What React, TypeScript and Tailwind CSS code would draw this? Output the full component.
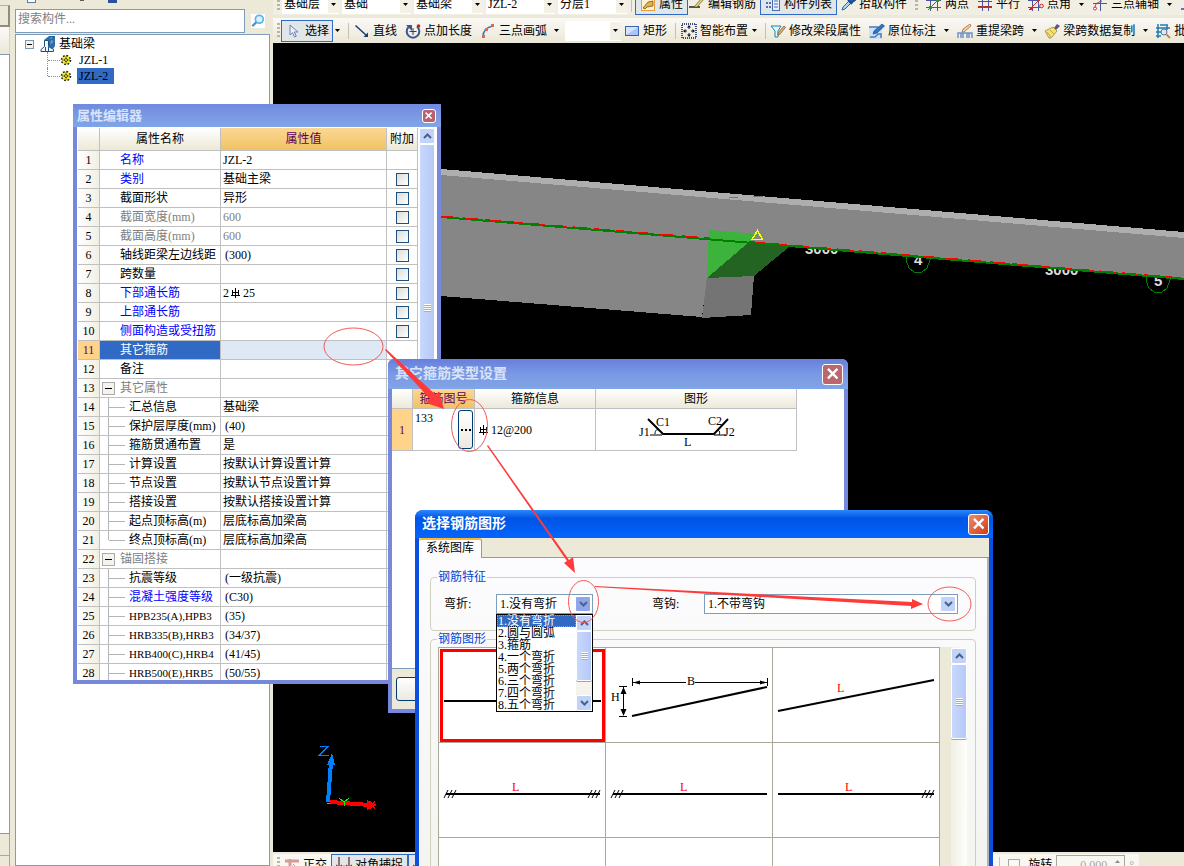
import React from 'react';

const fontStack = "font-['Liberation_Serif','Noto_Sans_CJK_SC',serif]";

type IconProps = { children: React.ReactNode; className?: string };

const Icon: React.FC<IconProps> = ({ children, className = 'h-4 w-4' }) => (
  <svg viewBox="0 0 16 16" fill="none" className={`shrink-0 ${className}`} aria-hidden="true">
    {children}
  </svg>
);

const icons = {
  pointer: (
    <Icon>
      <path d="M4 2v10l2.500-2.300L8.500 14l1.800-.8-2-4.200H12z" fill="#e8f0fb" stroke="#6b83ad" />
    </Icon>
  ),
  line: (
    <Icon>
      <path d="M1.500 2.500l11 10" stroke="#1c3a78" strokeWidth="1.500" />
      <path d="M14 14H9.500L14 9.500z" fill="#1c3a78" />
    </Icon>
  ),
  pointLength: (
    <Icon>
      <path d="M4 3.500a6.300 6.300 0 1 0 8 0" stroke="#3a5795" strokeWidth="2" />
      <path d="M1 2h6v6z" fill="#3a5795" />
      <path d="M8 5v7M4.500 8.500h7" stroke="#2a4070" />
      <circle cx="13.500" cy="3" r="1.800" fill="#b52a3c" />
    </Icon>
  ),
  arc: (
    <Icon>
      <path d="M3 14C3 7 7 4 13 3" stroke="#3d72b8" strokeWidth="1.500" />
      <path d="M2 12h3v3H2zM5 5h3v3H5zM11 1h3v3h-3z" fill="#e5674a" />
    </Icon>
  ),
  rect: (
    <Icon>
      <rect x="1.500" y="3.500" width="13" height="9" fill="#a9c6f7" stroke="#3b62b0" />
      <path d="M2 4h12L2 12z" fill="#d5e4fd" />
    </Icon>
  ),
  layout: (
    <Icon>
      <rect x="1" y="1" width="14" height="14" stroke="#3a4d78" strokeDasharray="1 1" strokeWidth="2" />
      <path d="M8 2l2 2.500H6zM8 14l2-2.500H6zM2 8l2.500-2v4zM14 8l-2.500-2v4z" fill="#10182c" />
      <path d="M8 4v2M8 10v2M4 8h2M10 8h2" stroke="#10182c" />
    </Icon>
  ),
  editSpan: (
    <Icon>
      <path d="M1 3h10l-3 5v6H5V8z" fill="#e4f5fc" stroke="#1c84ad" />
      <path d="M8 10l6-7 1.500 1.500-6 7L8 12z" fill="#f0b054" stroke="#6d4530" strokeWidth=".7" />
    </Icon>
  ),
  annotate: (
    <Icon>
      <rect x="0" y="3" width="13" height="13" fill="#cfe0f5" />
      <path d="M0 4h9M1 14h5l3-3h3v4" stroke="#4a7dbf" strokeWidth="1.500" />
      <path d="M4 11l1-3 8-7 2.500 2-7.500 7z" fill="#2f76c9" stroke="#174a8c" strokeWidth=".7" />
    </Icon>
  ),
  respan: (
    <Icon>
      <path d="M1 15V10h3v5M6 15v-5h4v5M12 15v-5h3v5M1 10h14" stroke="#6c93c9" strokeWidth="1.500" />
      <path d="M5 9l1-3 7-5 1 2-7 6z" fill="#f0cf9a" stroke="#a15e4c" strokeWidth=".7" />
    </Icon>
  ),
  brush: (
    <Icon>
      <path d="M10 5l3-4 3 2-4 4z" fill="#5a5880" />
      <path d="M1 8l8-4 4 4-6 7H5z" fill="#f5e272" stroke="#8a7a2c" strokeWidth=".7" />
      <path d="M3 9l4 5M6 7l4 4" stroke="#bda540" />
    </Icon>
  ),
  batch: (
    <Icon>
      <path d="M1 5h14M1 9h5M3 1v14M5 2h8M1 13h5M12 2v5" stroke="#1f7cb8" strokeWidth="1.500" />
      <circle cx="9" cy="9" r="3" fill="#d7ecfa" stroke="#5c7089" />
      <path d="M11.500 11.500L15 15" stroke="#d78036" strokeWidth="2" />
    </Icon>
  ),
  props: (
    <Icon>
      <rect x="1.500" y="1.500" width="13" height="13" fill="#fff3d2" stroke="#eb9d3c" />
      <path d="M3 12l5-6 5-1v5l-6 1-2 2z" fill="#e9b13f" stroke="#60471d" strokeWidth=".7" />
    </Icon>
  ),
  editBar: (
    <Icon>
      <path d="M0 11h11" stroke="#222" strokeWidth="1.500" />
      <path d="M5 11L13 2l2 1-7 8z" fill="#efd673" stroke="#5c4d20" strokeWidth=".7" />
    </Icon>
  ),
  list: (
    <Icon>
      <path d="M2 2v12M5 2v12" stroke="#5272b3" strokeDasharray="2 2" strokeWidth="2" />
      <rect x="7.500" y="1.500" width="7" height="13" fill="#e4eeff" stroke="#4a6eae" />
      <path d="M9 5h4M9 8h4M9 11h4" stroke="#4a6eae" />
    </Icon>
  ),
  dropper: (
    <Icon>
      <path d="M2 14l1-3 6-6 2 2-6 6z" fill="#a8d5f2" stroke="#2369ac" />
      <path d="M8 4l4 4M9 5l3-4 3 3-4 3z" fill="#2869bd" stroke="#1c4b91" strokeWidth="2" />
    </Icon>
  ),
  twoPoint: (
    <Icon>
      <path d="M4.500 0v15M11.500 0v15M0 4.500h15M0 11.500h15" stroke="#4a55a4" />
      <path d="M2 14L14 2" stroke="#b3302b" />
      <path d="M3 10h3v3H3zM10 3h3v3h-3z" fill="#30922d" />
    </Icon>
  ),
  parallel: (
    <Icon>
      <path d="M5.500 0v15M11.500 0v15" stroke="#4a55a4" />
      <path d="M1 5.500h14M1 10.500h14" stroke="#b3302b" />
      <path d="M1 11.500h14" stroke="#4a55a4" />
    </Icon>
  ),
  pointAngle: (
    <Icon>
      <path d="M4.500 0v15M10.500 0v15M0 4.500h12M0 11.500h12" stroke="#4a55a4" />
      <path d="M1 14L13 2" stroke="#c7282c" />
      <circle cx="13.500" cy="10" r="1.800" stroke="#d0202c" />
      <path d="M2 12h3v2H2z" fill="#d0202c" />
    </Icon>
  ),
  auxAxis: (
    <Icon>
      <path d="M8.500 0v15M1 7.500h14" stroke="#4a55a4" />
      <path d="M3 13c0-5 1-6 7-8" stroke="#d0303b" />
      <circle cx="3" cy="12.500" r="1.500" fill="#fff" stroke="#d0303b" />
    </Icon>
  ),
  more: (
    <Icon>
      <path d="M1 13h9c3 0 4-3 5-6" stroke="#5a77a8" strokeWidth="2" />
      <circle cx="12" cy="7" r="2" stroke="#d0607b" />
    </Icon>
  ),
  ortho: (
    <Icon>
      <path d="M1 4h14M6 2v12" stroke="#d99a9a" strokeWidth="3" />
      <path d="M9 7l3 3" stroke="#9aa4bb" />
    </Icon>
  ),
  snap: (
    <Icon>
      <path d="M3 0v12M13 0v12M0 8l3 3 3-3M10 8l3 3 3-3" stroke="#784848" strokeWidth="1.500" />
      <path d="M7 8h3v5H7z" fill="#dfc06b" />
    </Icon>
  ),
};

const Caret = () => (
  <svg viewBox="0 0 5 3" className="h-[3px] w-[5px] shrink-0" aria-hidden="true">
    <path d="M0 0h5L2.500 3z" fill="#000" />
  </svg>
);

const Grip: React.FC = () => (
  <span className="h-4 w-[3px] shrink-0 bg-[repeating-linear-gradient(to_bottom,#b9b5a3_0_2px,transparent_2px_4px)]" />
);

const Separator: React.FC = () => <span className="h-4 w-px shrink-0 bg-[#c5c2b4]" />;

type ToolProps = { icon: React.ReactNode; label: string; className?: string; active?: boolean };

const Tool: React.FC<ToolProps> = ({ icon, label, className = '', active = false }) => (
  <button
    type="button"
    className={`flex h-[22px] shrink-0 items-center gap-[3px] whitespace-nowrap ${
      active ? 'border border-[#316ac5] bg-[#e1e6e8] px-1' : ''
    } ${className}`}
  >
    {icon}
    {label}
  </button>
);

const MenuArrow: React.FC<{ className?: string }> = ({ className = 'ml-2' }) => (
  <button type="button" aria-label="更多" className={`flex h-[22px] shrink-0 items-center ${className}`}>
    <Caret />
  </button>
);

const ToolbarSelect: React.FC<{ value: string; label: string; className: string }> = ({ value, label, className }) => (
  <div className={`flex h-5 shrink-0 items-center bg-white ${className}`}>
    <select aria-label={label} className="min-w-0 flex-1 appearance-none pl-0.5 leading-5 outline-none">
      <option>{value}</option>
    </select>
    <span className="flex h-[18px] w-[11px] items-center justify-center bg-[#f3f1e7]">
      <Caret />
    </span>
  </div>
);

const Toolbars: React.FC = () => (
  <div className="shrink-0 bg-[#ece9d8]">
    <div className="flex h-[15px] items-end overflow-hidden bg-[#f1efe4]">
      <div className="flex h-[22px] items-center pl-1">
        <Grip />
        <ToolbarSelect label="楼层" value="基础层" className="ml-0.5 w-[57px]" />
        <ToolbarSelect label="类型" value="基础" className="ml-[3px] w-[69px]" />
        <ToolbarSelect label="构件类型" value="基础梁" className="ml-[3px] w-[69px]" />
        <ToolbarSelect label="构件" value="JZL-2" className="ml-[3px] w-[69px]" />
        <ToolbarSelect label="分层" value="分层1" className="mr-1 ml-[3px] w-[69px]" />
        <Separator />
        <Tool icon={icons.props} label="属性" active className="ml-[3px]" />
        <Tool icon={icons.editBar} label="编辑钢筋" className="ml-px" />
        <Tool icon={icons.list} label="构件列表" active className="ml-1" />
        <Tool icon={icons.dropper} label="拾取构件" className="mr-2 ml-[3px]" />
        <Grip />
        <Tool icon={icons.twoPoint} label="两点" className="ml-2" />
        <Tool icon={icons.parallel} label="平行" className="ml-2" />
        <Tool icon={icons.pointAngle} label="点角" className="ml-2" />
        <MenuArrow />
        <Tool icon={icons.auxAxis} label="三点辅轴" className="ml-2" />
        <MenuArrow />
        <Tool icon={icons.more} label="" className="ml-2" />
      </div>
    </div>
    <div className="mt-[3px] flex h-[25px] items-center overflow-hidden bg-gradient-to-b from-[#faf9f5] to-[#ebe7d7] pl-1">
      <Grip />
      <Tool icon={icons.pointer} label="选择" active className="ml-px w-[52px]" />
      <MenuArrow className="ml-[2px] mr-2" />
      <Separator />
      <Tool icon={icons.line} label="直线" className="ml-[5px]" />
      <Tool icon={icons.pointLength} label="点加长度" className="ml-2" />
      <Tool icon={icons.arc} label="三点画弧" className="ml-2" />
      <MenuArrow className="ml-[7px]" />
      <ToolbarSelect label="画法" value="" className="ml-[6px] w-14" />
      <Tool icon={icons.rect} label="矩形" className="mr-2 ml-[3px]" />
      <Separator />
      <Tool icon={icons.layout} label="智能布置" className="ml-[5px]" />
      <MenuArrow className="mr-2 ml-1" />
      <Separator />
      <Tool icon={icons.editSpan} label="修改梁段属性" className="ml-1" />
      <Tool icon={icons.annotate} label="原位标注" className="ml-2" />
      <MenuArrow />
      <Tool icon={icons.respan} label="重提梁跨" className="ml-2" />
      <MenuArrow />
      <Tool icon={icons.brush} label="梁跨数据复制" className="ml-[7px]" />
      <MenuArrow />
      <Tool icon={icons.batch} label="批" className="ml-[7px]" />
    </div>
  </div>
);

const Scene: React.FC = () => (
  <svg viewBox="273 43 911 809" shapeRendering="crispEdges" className="h-[809px] w-[911px] max-w-none" aria-label="三维视图">
    <g fill="#dcdcdc" fontFamily="Liberation Sans" fontSize="15" fontWeight="700">
      <text x="805" y="254">3000</text>
      <text x="1045" y="275">3000</text>
      <text x="914" y="265">4</text>
      <text x="1154" y="286">5</text>
    </g>
    <g fill="none" stroke="#008000">
      <path d="M906 255v5l3 8 5 4h8l5-4 3-8v-4" />
      <path d="M1146 276v5l3 7 5 4h8l5-4 3-8v-4" />
    </g>
    <path d="M441 175L1184 238V278L789 247L749 242L707 277L702 317L441 296z" fill="#868686" />
    <path d="M441 169L1184 232V238L441 175z" fill="#aeaeae" />
    <path d="M729 197.500h9M753 196.500h10" stroke="#777" />
    <path d="M707 277L754 276L751 315L702 318z" fill="#747474" />
    <path d="M709 230L757 234L749 242L707 278z" fill="#3cb43c" />
    <path d="M749 242L789 247L754 276L707 278z" fill="#236423" />
    <path d="M441 217L1184 279" stroke="#008000" strokeWidth="2" />
    <path d="M441 216L709 238M749 241.500L1184 278" stroke="#f00" strokeWidth="1" strokeDasharray="16 6" />
    <path d="M757.500 230.500l5 9h-10.500z" fill="none" stroke="#ff0" strokeWidth="1.500" />
    <path d="M319.500 746.500h8.500l-8.500 8.500h9" fill="none" stroke="#0080ff" />
    <path d="M328 802L331 762" stroke="#0080ff" strokeWidth="4" />
    <path d="M332 753l3 12h-8z" fill="#0080ff" />
    <path d="M330 802L369 805" stroke="#f00" strokeWidth="4" />
    <path d="M367 800l10 5-10 5z" fill="#f00" />
    <path d="M370 801l5 8M375 801l-5 8" stroke="#f00" />
    <path d="M339 798l5 4 5-4M344 802v4M327 803h3" fill="none" stroke="#0f0" />
  </svg>
);

const StatusBar: React.FC = () => (
  <div className="flex h-[14px] shrink-0 items-start overflow-hidden bg-[#ece9d8] pt-[2px]">
    <div className="flex h-[22px] w-[866px] shrink-0 items-center bg-[#f8f7f2] pl-1">
      <Grip />
      <Tool icon={icons.ortho} label="正交" className="ml-1" />
      <Tool icon={icons.snap} label="对角捕捉" active className="ml-1" />
      <Tool icon={icons.snap} label="交点" active />
      <div className="ml-auto flex items-center gap-2 pr-[5px]">
        <Separator />
        <input id="rotate" type="checkbox" className="h-3 w-3 appearance-none border border-[#aca899] bg-[#faf9f5]" />
        <label htmlFor="rotate">旋转</label>
        <div className="-ml-1 flex h-5 w-[69px] items-center border border-[#aca899]">
          <input aria-label="旋转角度" defaultValue="0.000" className="w-[50px] text-right text-[#aca899] outline-none" />
          <svg viewBox="0 0 5 3" className="mb-2 ml-2 h-[3px] w-[5px]" aria-hidden="true">
            <path d="M0 3h5L2.500 0z" fill="#8f8c80" />
          </svg>
        </div>
        <span className="-ml-1 text-[#aca899]">°</span>
      </div>
    </div>
  </div>
);

const GearIcon = () => (
  <svg viewBox="0 0 12 12" className="h-3 w-3 shrink-0" aria-hidden="true">
    <circle cx="6" cy="6" r="4.500" stroke="#222" strokeWidth="1.500" strokeDasharray="1.800 1.700" fill="#f7ee2c" />
    <path d="M6 2v8M2 6h8" stroke="#333" strokeWidth=".6" />
    <circle cx="6" cy="6" r="1.500" fill="#f7ee2c" stroke="#222" strokeWidth=".8" />
  </svg>
);

const treeItems = [
  { name: 'JZL-1', selected: false },
  { name: 'JZL-2', selected: true },
];

const ComponentTree: React.FC = () => (
  <aside className="flex w-[255px] shrink-0 flex-col">
    <div className="flex h-[9px] items-start pl-3">
      <span className="h-[3px] w-[9px] border border-t-0 border-[#5b79a8] bg-white" />
      <span className="ml-11 h-px w-1 bg-[#5b5b5b]" />
      <span className="ml-6 h-[3px] w-[9px] bg-[#2b4f9b]" />
    </div>
    <div className="flex h-[24px]">
      <input
        aria-label="搜索构件"
        placeholder="搜索构件..."
        className="h-full min-w-0 flex-1 border border-[#7f9db9] bg-white pl-0.5 pb-1 outline-none placeholder:text-[#808080]"
      />
      <button type="button" aria-label="搜索" className="flex w-[25px] items-center justify-center">
        <Icon className="h-[14px] w-[14px] bg-white">
          <circle cx="9.500" cy="6" r="4.500" fill="#dff1fd" stroke="#5fb4ef" strokeWidth="2" />
          <path d="M6 9.500L1.500 14" stroke="#438fd0" strokeWidth="2.500" />
        </Icon>
      </button>
    </div>
    <div className="mt-px flex-1 border border-[#7f9db9] bg-white pt-px pl-2">
      <div className="flex h-4 items-center pl-px">
        <svg viewBox="0 0 9 9" className="h-[9px] w-[9px]" aria-hidden="true">
          <rect x=".5" y=".5" width="8" height="8" fill="#f4f3ee" stroke="#7898b5" />
          <path d="M2 4.500h5" stroke="#000" />
        </svg>
        <Icon className="ml-[6px] h-4 w-4">
          <path d="M4 4l5-4h6v10l-2 3-4-2z" fill="#2e6ea8" />
          <path d="M9 1l5 0-4 4v5l4-4" fill="#5c9cd0" stroke="#1b5185" strokeWidth=".6" />
          <path d="M4.500 4.500h4v6l5 3v2h-12.500v-2l3.500-3z" fill="#f0f6fc" stroke="#1b5185" />
          <path d="M5.500 11v4M8.500 11v4" stroke="#1b5185" />
        </Icon>
        <span className="ml-[3px]">基础梁</span>
      </div>
      <ul>
        {treeItems.map((item, index) => (
          <li key={item.name} className="ml-[23px] flex h-4 items-center">
            <span
              className={`w-0 self-start border-l border-dotted border-[#8f8f88] ${
                index === treeItems.length - 1 ? 'h-2' : 'h-4'
              }`}
            />
            <span className="w-3 border-t border-dotted border-[#8f8f88]" />
            <GearIcon />
            <span className={`ml-[5px] flex h-4 items-center px-0.5 ${item.selected ? 'w-[37px] bg-[#316ac5]' : ''}`}>
              {item.name}
            </span>
          </li>
        ))}
      </ul>
    </div>
  </aside>
);

const CloseButton: React.FC<{ className: string }> = ({ className }) => (
  <button
    type="button"
    aria-label="关闭"
    className={`flex shrink-0 items-center justify-center rounded-[3px] border border-white ${className}`}
  >
    <svg viewBox="0 0 12 12" className="h-3/5 w-3/5" aria-hidden="true">
      <path d="M1 1l10 10M11 1L1 11" stroke="#fff" strokeWidth="2.500" />
    </svg>
  </button>
);

const ScrollButton: React.FC<{ down?: boolean; label: string; className?: string }> = ({ down = false, label, className = 'bg-[#c1d3fb]' }) => (
  <button
    type="button"
    aria-label={label}
    className={`flex h-4 w-4 shrink-0 items-center justify-center rounded-[2px] border border-white ${className}`}
  >
    <svg viewBox="0 0 9 6" className="h-[6px] w-[9px]" aria-hidden="true">
      <path d={down ? 'M1 1l3.500 3.500L8 1' : 'M1 5l3.500-3.500L8 5'} fill="none" stroke="#4d6185" strokeWidth="2" />
    </svg>
  </button>
);

const ScrollThumb: React.FC<{ className: string }> = ({ className }) => (
  <div
    className={`flex w-4 shrink-0 items-center justify-center rounded-[2px] border border-white bg-gradient-to-r from-[#c9d8fc] to-[#b5c9f7] shadow-[0_1px_0_#8ba6d8] ${className}`}
  >
    <span className="h-2 w-[7px] bg-[repeating-linear-gradient(to_bottom,#fff_0_1px,#8cb0f8_1px_2px)]" />
  </div>
);

const RebarMark: React.FC = () => (
  <svg viewBox="0 0 11 10" shapeRendering="crispEdges" className="mr-[2px] ml-px inline-block h-[10px] w-[11px] align-[-1px]" aria-label="三级钢">
    <path d="M5.500 0v10M2.500 2v6M8.500 2v6M2.500 4.500h6M1 7.500h9" fill="none" stroke="#000" />
  </svg>
);

type PropertyRow = {
  name: string;
  value?: React.ReactNode;
  tone?: 'blue' | 'gray' | 'black';
  check?: boolean;
  kind?: 'group' | 'child' | 'last';
  selected?: boolean;
  indent?: boolean;
  small?: boolean;
};

const properties: PropertyRow[] = [
  { name: '名称', value: 'JZL-2', tone: 'blue' },
  { name: '类别', value: '基础主梁', tone: 'blue', check: true },
  { name: '截面形状', value: '异形', check: true },
  { name: '截面宽度(mm)', value: '600', tone: 'gray', check: true },
  { name: '截面高度(mm)', value: '600', tone: 'gray', check: true },
  { name: '轴线距梁左边线距', value: '(300)', check: true, indent: true },
  { name: '跨数量', check: true },
  { name: '下部通长筋', value: <>2<RebarMark />25</>, tone: 'blue', check: true },
  { name: '上部通长筋', tone: 'blue', check: true },
  { name: '侧面构造或受扭筋', tone: 'blue', check: true },
  { name: '其它箍筋', selected: true },
  { name: '备注' },
  { name: '其它属性', tone: 'gray', kind: 'group' },
  { name: '汇总信息', value: '基础梁', kind: 'child' },
  { name: '保护层厚度(mm)', value: '(40)', kind: 'child', indent: true },
  { name: '箍筋贯通布置', value: '是', kind: 'child' },
  { name: '计算设置', value: '按默认计算设置计算', kind: 'child' },
  { name: '节点设置', value: '按默认节点设置计算', kind: 'child' },
  { name: '搭接设置', value: '按默认搭接设置计算', kind: 'child' },
  { name: '起点顶标高(m)', value: '层底标高加梁高', kind: 'child' },
  { name: '终点顶标高(m)', value: '层底标高加梁高', kind: 'last' },
  { name: '锚固搭接', tone: 'gray', kind: 'group' },
  { name: '抗震等级', value: '(一级抗震)', kind: 'child', indent: true },
  { name: '混凝土强度等级', value: '(C30)', tone: 'blue', kind: 'child', indent: true },
  { name: 'HPB235(A),HPB3', value: '(35)', kind: 'child', indent: true, small: true },
  { name: 'HRB335(B),HRB3', value: '(34/37)', kind: 'child', indent: true, small: true },
  { name: 'HRB400(C),HRB4', value: '(41/45)', kind: 'child', indent: true, small: true },
  { name: 'HRB500(E),HRB5', value: '(50/55)', kind: 'child', indent: true, small: true },
];

const tones = { blue: 'text-[#0000ff]', gray: 'text-[#808080]', black: 'text-black' };

const PropertyName: React.FC<{ row: PropertyRow }> = ({ row }) => {
  const { kind, name, small } = row;

  if (kind === 'group') {
    return (
      <div className="flex h-[18px] items-center overflow-hidden pl-[2px]">
        <button type="button" aria-label="折叠" className="mr-[5px] flex h-[13px] w-[13px] items-center justify-center border border-[#aaa] bg-[#f4f3ee]">
          <span className="h-px w-[7px] bg-black" />
        </button>
        {name}
      </div>
    );
  }

  if (kind) {
    return (
      <div className={`flex h-[18px] items-center overflow-hidden pl-2 ${small ? 'text-[11px]' : ''}`}>
        <span className={`w-px shrink-0 self-start bg-[#b5b5b5] ${kind === 'last' ? 'h-[9px]' : 'h-[18px]'}`} />
        <span className="mr-1 h-px w-4 shrink-0 bg-[#b5b5b5]" />
        {name}
      </div>
    );
  }

  return <div className="h-[18px] overflow-hidden pl-5">{name}</div>;
};

const cell = 'border-r border-b border-[#c0c0c0] p-0';
const headCell = `${cell} bg-gradient-to-b from-white to-[#ece9d8] font-normal`;
const activeHead = `${cell} bg-gradient-to-b from-[#fbd794] to-[#f2c263] font-normal text-[#5c005c]`;

const PropertyEditor: React.FC = () => (
  <section className="absolute top-[104px] left-[73px] flex h-[580px] w-[368px] flex-col border-x-4 border-b-4 border-[#7688dc] bg-white">
    <header className="-mx-1 flex h-[23px] shrink-0 items-center justify-between bg-gradient-to-b from-[#6f8adf] via-[#7b98e4] to-[#80a5e8] pr-[5px] pl-1">
      <h2 className="text-[13px] font-bold text-[#d8e4f8]">属性编辑器</h2>
      <CloseButton className="h-[14px] w-[14px] bg-[#b8626f]" />
    </header>
    <div className="mt-px flex min-h-0 flex-1 overflow-hidden pl-px">
      <table className="w-[340px] shrink-0 table-fixed border-separate border-spacing-0 self-start whitespace-nowrap">
        <colgroup>
          <col className="w-[22px]" />
          <col className="w-[121px]" />
          <col className="w-[166px]" />
          <col className="w-[31px]" />
        </colgroup>
        <thead>
          <tr className="h-[23px]">
            <th className={headCell} />
            <th className={headCell}>属性名称</th>
            <th className={activeHead}>属性值</th>
            <th className={headCell}>附加</th>
          </tr>
        </thead>
        <tbody>
          {properties.map((row, index) => (
            <tr key={row.name} className="h-[19px] leading-[18px]">
              <td
                className={`${cell} text-center ${
                  row.selected ? 'bg-[#ffd48a] text-[#5c005c]' : 'bg-gradient-to-r from-white to-[#f1efe4]'
                }`}
              >
                {index + 1}
              </td>
              <td className={`${cell} ${row.selected ? 'bg-[#316ac5] text-white' : tones[row.tone ?? 'black']}`}>
                <PropertyName row={row} />
              </td>
              <td className={`${cell} ${row.selected ? 'bg-[#dfe8f5]' : ''} ${row.tone === 'gray' ? 'text-[#808080]' : ''}`}>
                <div className={`h-[18px] overflow-hidden ${row.indent ? 'pl-1' : 'pl-0.5'}`}>{row.value}</div>
              </td>
              <td className={cell}>
                {row.check && (
                  <input
                    type="checkbox"
                    aria-label={`附加 ${row.name}`}
                    className="mx-auto block h-[13px] w-[13px] appearance-none border border-[#1c5180] bg-gradient-to-br from-[#dcdcd7] to-white"
                  />
                )}
              </td>
            </tr>
          ))}
        </tbody>
      </table>
      <div className="ml-px w-4 bg-[#f5f4ef]">
        <ScrollButton label="向上滚动" />
        <ScrollThumb className="h-[328px]" />
      </div>
    </div>
  </section>
);

const StirrupShape: React.FC = () => (
  <svg viewBox="-6 0 120 40" className="mx-auto h-10 w-[120px]" fontFamily="Liberation Serif" fontSize="12" aria-hidden="true">
    <path d="M10 9l15 15h51l14-15" fill="none" stroke="#000" strokeWidth="2" />
    <path d="M12 25h12M76 25h12M17 24c0-4 2-5 4-4M80 20c2 1 2 3 1 5" fill="none" stroke="#000" />
    <text x="18" y="16">C1</text>
    <text x="70" y="15">C2</text>
    <text x="1" y="26">J1</text>
    <text x="86" y="26">J2</text>
    <text x="46" y="36">L</text>
  </svg>
);

const StirrupDialog: React.FC = () => (
  <section className="absolute top-[359px] left-[388px] flex h-[354px] w-[460px] flex-col rounded-t-md border-x-4 border-b-4 border-[#7688dc] bg-white">
    <header className="-mx-1 flex h-[30px] shrink-0 items-center justify-between rounded-t-md bg-gradient-to-b from-[#6680dd] via-[#7b98e4] to-[#80a5e8] pr-[5px] pl-[7px]">
      <h2 className="text-[14px] font-bold text-[#d8e4f8]">其它箍筋类型设置</h2>
      <CloseButton className="h-[21px] w-[21px] bg-[#bc6670]" />
    </header>
    <div className="flex-1">
      <table className="w-[405px] table-fixed border-separate border-spacing-0">
        <colgroup>
          <col className="w-[21px]" />
          <col className="w-[62px]" />
          <col className="w-[121px]" />
          <col className="w-[201px]" />
        </colgroup>
        <thead>
          <tr className="h-5">
            <th className={headCell} />
            <th className={activeHead}>箍筋图号</th>
            <th className={headCell}>箍筋信息</th>
            <th className={headCell}>图形</th>
          </tr>
        </thead>
        <tbody>
          <tr className="h-[42px]">
            <td className={`${cell} bg-[#ffd48a] text-center text-[#5c005c]`}>1</td>
            <td className={cell}>
              <div className="flex justify-between pr-px pl-[2px]">
                133
                <button
                  type="button"
                  aria-label="选择图形"
                  className="flex h-[39px] w-[15px] items-center justify-center gap-[2px] rounded-[3px] border border-[#003c74] bg-gradient-to-b from-white to-[#ece9e0]"
                >
                  <span className="h-[2px] w-[2px] bg-black" />
                  <span className="h-[2px] w-[2px] bg-black" />
                  <span className="h-[2px] w-[2px] bg-black" />
                </button>
              </div>
            </td>
            <td className={`${cell} pl-[2px]`}>
              <RebarMark />
              12@200
            </td>
            <td className={cell}>
              <div className="pr-2">
                <StirrupShape />
              </div>
            </td>
          </tr>
        </tbody>
      </table>
    </div>
    <footer className="h-[41px] border-t border-[#7f9db9] bg-[#ece9d8] px-1 pt-2">
      <button type="button" aria-label="确定" className="h-6 w-20 rounded-[3px] border border-[#003c74] bg-gradient-to-b from-white to-[#ece9e0]" />
    </footer>
  </section>
);

const bendOptions = ['没有弯折', '圆与圆弧', '箍筋', '一个弯折', '两个弯折', '三个弯折', '四个弯折', '五个弯折'];

const ComboBox: React.FC<{ id: string; value: string; className: string; open?: boolean }> = ({ id, value, className, open = false }) => (
  <div className={`flex h-5 items-center border border-[#7f9db9] bg-white pr-px ${className}`}>
    <select id={id} className="min-w-0 flex-1 appearance-none pl-[3px] leading-[18px] outline-none">
      <option>{value}</option>
    </select>
    <ScrollButton down label="展开" className={open ? 'bg-[#8fa6ea]' : 'bg-[#c1d3fb]'} />
  </div>
);

const hatchLeft = 'M5 55l4-8M9 55l4-8M13 55l4-8';
const hatchRight = 'M149 55l4-8M153 55l4-8M157 55l4-8';

const shapes = [
  <path key="s" d="M5 53h157" strokeWidth="2" />,
  <g key="s">
    <path d="M26 68L161 39" strokeWidth="2" />
    <path d="M26 34.500h54M89 34.500h72M26.500 30v8M161.500 30v8M17.500 39v28M13 38.500h8M13 68.500h8" />
    <path d="M27 34.500l7-2v4zM161 34.500l-7-2v4zM17.500 39l-3 7h6zM17.500 68l-3-7h6z" fill="#000" strokeWidth="0" />
    <text x="81" y="37" fill="#000" stroke="none">B</text>
    <text x="5" y="53" fill="#000" stroke="none">H</text>
  </g>,
  <g key="s">
    <path d="M5 63L161 32" strokeWidth="2" />
    <text x="64" y="44" fill="#f00" stroke="none">L</text>
  </g>,
  <g key="s">
    <path d="M7 51h154" strokeWidth="2" />
    <path d={hatchLeft} />
    <path d={hatchRight} />
    <text x="73" y="48" fill="#f00" stroke="none">L</text>
  </g>,
  <g key="s">
    <path d="M7 51h154" strokeWidth="2" />
    <path d={hatchLeft} />
    <text x="74" y="48" fill="#f00" stroke="none">L</text>
  </g>,
  <g key="s">
    <path d="M5 51h156" strokeWidth="2" />
    <path d={hatchRight} />
    <text x="72" y="48" fill="#f00" stroke="none">L</text>
  </g>,
  null,
  null,
  null,
];

const ShapeDialog: React.FC = () => (
  <section className="absolute top-[510px] left-[415px] flex h-[420px] w-[578px] flex-col rounded-t-lg border-x-4 border-[#0a4fe0] bg-[#fcfcfe]">
    <header className="-mx-1 flex h-[28px] shrink-0 items-center justify-between rounded-t-lg bg-gradient-to-b from-[#2b87ff] via-[#0054e3] via-30% to-[#0366ff] pr-[4px] pl-[7px]">
      <h2 className="text-[14px] font-bold text-white">选择钢筋图形</h2>
      <CloseButton className="h-[21px] w-[21px] bg-gradient-to-br from-[#ef8a6c] to-[#cc3a12]" />
    </header>
    <div className="flex h-5 shrink-0 items-stretch bg-[#ece9d8]" role="tablist">
      <button type="button" role="tab" aria-selected="true" className="w-[63px] rounded-t-[3px] border-t-2 border-r border-t-[#ffb72d] border-r-[#919b9c] bg-[#fcfcfe] pb-0.5">
        系统图库
      </button>
      <span className="flex-1 border-b border-[#919b9c]" />
    </div>
    <div className="flex flex-1 flex-col border-r-2 border-[#aeb4b2] bg-gradient-to-b from-[#fcfcfe] to-[#f2f2ee] px-[11px] pt-[11px]">
      <fieldset className="h-[62px] shrink-0 rounded border border-[#d0d0bf]">
        <legend className="ml-[6px] px-px leading-4 text-[#0046d5]">钢筋特征</legend>
        <div className="flex items-center pt-[9px] pl-[13px]">
          <label htmlFor="bend" className="w-[52px]">弯折:</label>
          <div className="relative w-[97px]">
            <ComboBox id="bend" value="1.没有弯折" className="w-full" open />
            <div className="absolute top-5 left-0 z-10 flex w-full border border-black bg-white">
              <ul role="listbox" aria-label="弯折选项" className="flex-1">
                {bendOptions.map((option, index) => (
                  <li
                    key={option}
                    role="option"
                    aria-selected={index === 0}
                    className={`h-3 pl-px leading-3 whitespace-nowrap ${
                      index === 0 ? 'bg-[#316ac5] text-white outline-1 -outline-offset-1 outline-dotted outline-[#ce953a]' : ''
                    }`}
                  >
                    {index + 1}.{option}
                  </li>
                ))}
              </ul>
              <div className="flex w-4 flex-col bg-[#f4f3ee]">
                <ScrollButton label="向上滚动" />
                <ScrollThumb className="h-[50px]" />
                <span className="flex-1" />
                <ScrollButton down label="向下滚动" />
              </div>
            </div>
          </div>
          <label htmlFor="hook" className="ml-[59px] w-[52px]">弯钩:</label>
          <ComboBox id="hook" value="1.不带弯钩" className="w-[254px]" />
        </div>
      </fieldset>
      <fieldset className="h-[260px] shrink-0 rounded border border-[#d0d0bf]">
        <legend className="ml-[6px] px-px leading-4 text-[#0046d5]">钢筋图形</legend>
        <div className="ml-[7px] flex">
          <div className="grid w-[502px] shrink-0 grid-cols-3 border-t border-l border-[#aca899] bg-white">
            {shapes.map((shape, index) => (
              <button
                key={index}
                type="button"
                aria-label={`图形 ${index + 1}`}
                className={`h-[95px] border-r border-b border-[#aca899] ${index === 0 ? 'outline-3 -outline-offset-4 outline-[#ff0000]' : ''}`}
              >
                <svg viewBox="0 0 166 94" className="h-[94px] w-[166px]" stroke="#000" fill="none" fontFamily="Liberation Serif" fontSize="12" aria-hidden="true">
                  {shape}
                </svg>
              </button>
            ))}
          </div>
          <div className="w-[11px] bg-[#ece9d8]" />
          <div className="w-4 bg-gradient-to-r from-[#f0efe6] to-[#fefefb]">
            <ScrollButton label="向上滚动" className="mt-px bg-[#c1d3fb]" />
            <ScrollThumb className="h-[75px]" />
          </div>
        </div>
      </fieldset>
    </div>
  </section>
);

const Annotations: React.FC = () => (
  <svg viewBox="0 0 1184 866" className="pointer-events-none absolute top-0 left-0 z-20 h-[866px] w-[1184px] max-w-none" aria-hidden="true">
    <g fill="none" stroke="#f25a5a">
      <ellipse cx="353.500" cy="346.500" rx="29.500" ry="18.500" />
      <ellipse cx="469.500" cy="425.500" rx="18" ry="26" />
      <ellipse cx="583.500" cy="601.500" rx="15" ry="21" />
      <ellipse cx="949.500" cy="604" rx="21.500" ry="17" />
    </g>
    <g fill="#ff3a3a">
      <path d="M385 350l1-1 50 46 3-3 5 17-18-6 4-4z" />
      <path d="M487 446l1-1 81 115 4-3 2 16-11-10 3-2z" />
      <path d="M595 586v1l316 19v3l12-5-11-5v3z" />
    </g>
  </svg>
);

const App: React.FC = () => (
  <div className={`relative flex h-screen w-full overflow-hidden bg-[#ece9d8] text-[12px] leading-4 text-black ${fontStack}`}>
    <div className="mr-[5px] flex w-[10px] shrink-0 flex-col pt-[5px]">
      <div className="h-[22px] border-t border-r-2 border-b-2 border-[#8f8c80] border-t-[#b5b2a3]" />
      <div className="h-[27px] border-r border-[#d6d3c5] bg-gradient-to-b from-[#fbfaf7] to-[#ebe7d7]" />
      <div className="h-[780px] border-y border-r border-[#7f9db9] bg-white" />
      <div className="h-[22px] border-r border-b border-[#aca899]" />
      <div className="flex-1 border-r border-[#aca899]" />
    </div>
    <ComponentTree />
    <main className="ml-[3px] flex min-w-0 flex-1 flex-col">
      <Toolbars />
      <div className="min-h-0 flex-1 overflow-hidden bg-black">
        <Scene />
      </div>
      <StatusBar />
    </main>
    <PropertyEditor />
    <StirrupDialog />
    <ShapeDialog />
    <Annotations />
  </div>
);

export default App;
